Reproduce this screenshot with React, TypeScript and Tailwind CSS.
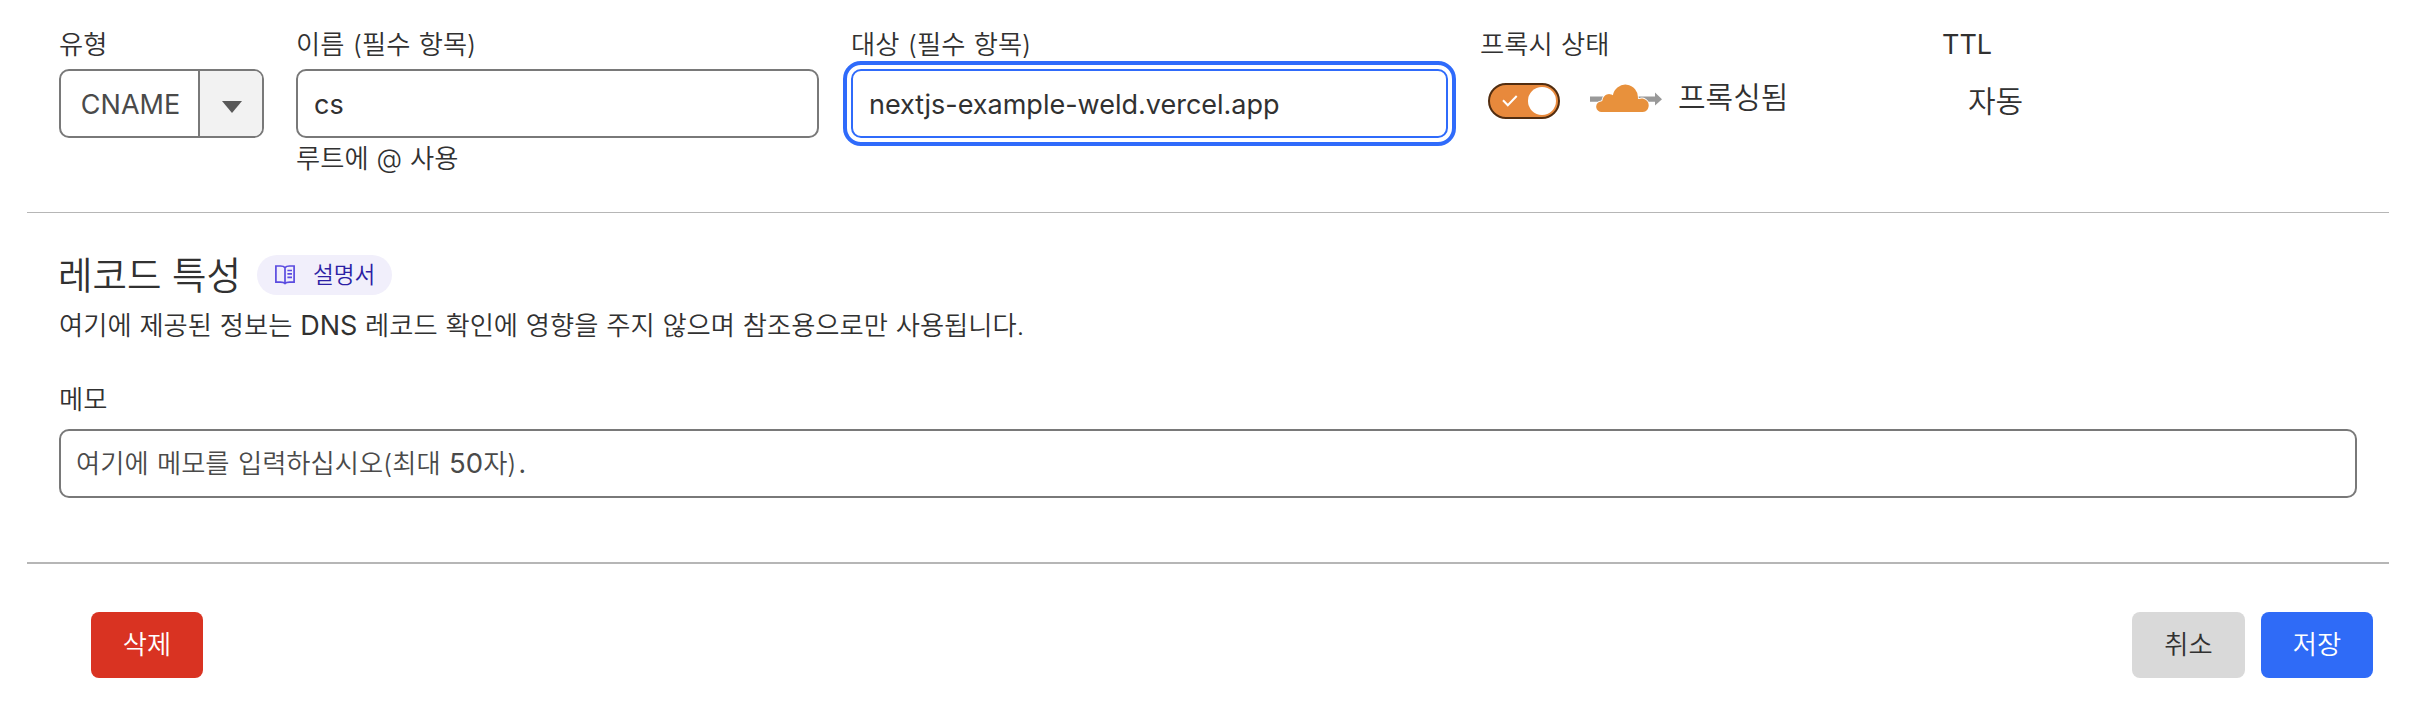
import type { ReactNode } from "react";

const sans = "font-[Inter,'Noto_Sans_CJK_KR',sans-serif]";

function Label({ children }: { children: ReactNode }) {
  return (
    <div className="h-[43px] pt-[3px] text-[26.3px] leading-[32px] whitespace-nowrap text-[#313131] [word-spacing:1px]">
      {children}
    </div>
  );
}

function ProxyCloud() {
  return (
    <svg className="block h-[30px] w-[74px]" viewBox="1589 84 74 30" fill="none">
      <path d="M1590 96.5h65v-4l7 6.7-7 6.3v-3.8h-65z" fill="#999999" />
      <path
        d="M1602 112a5.200 5.200 0 0 1-1-10.600C1602.300 101.200 1602.600 100.500 1602.600 99.200A6.800 6.800 0 0 1 1612.900 95.200A12.600 12.600 0 0 1 1637.900 98.200C1638 99 1638.400 99.300 1639.200 98.900A7 7 0 0 1 1648.700 105.300C1648.700 109 1646.400 112 1642.800 112z"
        fill="#e8913c"
        stroke="#ffffff"
        strokeWidth="1.6"
        paintOrder="stroke"
      />
    </svg>
  );
}

function BookIcon() {
  return (
    <svg className="block h-[20px] w-[20px]" viewBox="0 0 20 20" fill="none" stroke="#5a4be0" strokeWidth="1.7">
      <path d="M10 2.600C9 1.400 7.500 1 5.500 1H.9v16.200h4.600c2.200 0 3.600.2 4.500 1.300 .9-1.100 2.300-1.300 4.500-1.300h4.600V1h-4.600C12.500 1 11 1.400 10 2.600zV18.500" />
      <path d="M12.400 5.500H17M12.400 8.900H17M12.400 12.300H17" />
    </svg>
  );
}

export default function App() {
  return (
    <div className={`flex h-[706px] w-[2418px] flex-col bg-white pr-[29px] pl-[27px] font-[350] text-[#313131] ${sans}`}>
      <section className="flex h-[213px] items-start border-b border-[#b6b6b6] pt-[26px] pl-8">
        <div className="w-[205px]">
          <Label>유형</Label>
          <button className="flex h-[69px] w-full overflow-hidden rounded-[10px] border-2 border-[#797979] bg-white">
            <span className="flex h-full flex-1 items-center justify-center pt-[3px] pl-[2px] text-[27px] font-normal text-[#4a4a4a]">
              CNAME
            </span>
            <span className="flex h-full w-[64px] items-center justify-center border-l-2 border-[#797979] bg-[#f2f2f2]">
              <svg className="mt-[6px] ml-px block h-[12px] w-[20px]" viewBox="0 0 20 12">
                <path d="M0 0h20L10 12z" fill="#595959" />
              </svg>
            </span>
          </button>
        </div>

        <div className="ml-8 w-[523px]">
          <Label>이름 (필수 항목)</Label>
          <div className="flex h-[69px] items-center rounded-[10px] border-2 border-[#797979] pt-[3px] pl-4 text-[27px] font-normal">
            cs
          </div>
          <div className="mt-1 text-[26.3px] leading-[34px] [word-spacing:0.6px]">루트에 @ 사용</div>
        </div>

        <div className="ml-8 w-[597px]">
          <Label>대상 (필수 항목)</Label>
          <div className="flex h-[69px] items-center rounded-[10px] border-2 border-[#2f6bfb] pt-[3px] pl-4 text-[27px] font-normal outline-4 outline-offset-4 outline-[#2f6bfb]">
            nextjs-example-weld.vercel.app
          </div>
        </div>

        <div className="ml-8 w-[462px]">
          <Label>프록시 상태</Label>
          <div className="flex items-start pl-2">
            <div className="mt-[14px] flex h-[36px] w-[72px] items-center justify-between rounded-full border-2 border-[#522d10] bg-[#e8893c] pr-[2px] pl-[12px]">
              <svg className="block h-[12px] w-[16px]" viewBox="0 0 16 12" fill="none">
                <path d="M1 5.200L5.800 10.200L14.700 1" stroke="#ffffff" strokeWidth="2" />
              </svg>
              <span className="block size-[28px] rounded-full bg-white" />
            </div>
            <div className="mt-[15px] ml-[29px]">
              <ProxyCloud />
            </div>
            <span className="ml-[15px] pt-[8px] text-[30px] leading-[40px]">프록싱됨</span>
          </div>
        </div>

        <div>
          <Label>
            <span className="text-[27px] font-normal">TTL</span>
          </Label>
          <div className="pt-[12px] pl-[26px] text-[30px] leading-[40px]">자동</div>
        </div>
      </section>

      <section className="flex h-[351px] flex-col border-b-2 border-[#b6b6b6] pt-[42px] pr-8 pl-8">
        <div className="flex h-[40px] items-center">
          <h2 className="-ml-px w-[199px] pt-px text-[37.5px] leading-[40px] font-[350] whitespace-nowrap">레코드 특성</h2>
          <a className="flex h-[40px] w-[135px] items-center rounded-full bg-[#f1effb] pl-[18px] text-[22.6px] text-[#2c1fa5]">
            <BookIcon />
            <span className="ml-[18px]">설명서</span>
          </a>
        </div>
        <p className="mt-[12px] h-[74px] text-[26.3px] leading-[38px] whitespace-nowrap [word-spacing:0.4px]">
          여기에 제공된 정보는 <span className="text-[27px] font-normal">DNS</span> 레코드 확인에 영향을 주지 않으며 참조용으로만 사용됩니다.
        </p>
        <div className="h-[48px] text-[26.3px] leading-[38px]">메모</div>
        <div className="flex h-[69px] items-center rounded-[10px] border-2 border-[#797979] pt-px pl-[15px] text-[26.3px] text-[#4a4a4a] [word-spacing:1px]">
          <span className="whitespace-nowrap">
            여기에 메모를 입력하십시오(최대 <span className="text-[27.5px] font-normal">50</span>자)
            <span className="ml-[2px] font-normal">.</span>
          </span>
        </div>
      </section>

      <footer className="flex items-center justify-between pt-12 pr-4 pl-16 text-[26.3px]">
        <button className="h-[66px] w-[112px] rounded-lg bg-[#d93322] text-white">삭제</button>
        <div className="flex gap-4">
          <button className="h-[66px] w-[113px] rounded-lg bg-[#d9d9d9]">취소</button>
          <button className="h-[66px] w-[112px] rounded-lg bg-[#2f6bf7] text-white">저장</button>
        </div>
      </footer>
    </div>
  );
}
